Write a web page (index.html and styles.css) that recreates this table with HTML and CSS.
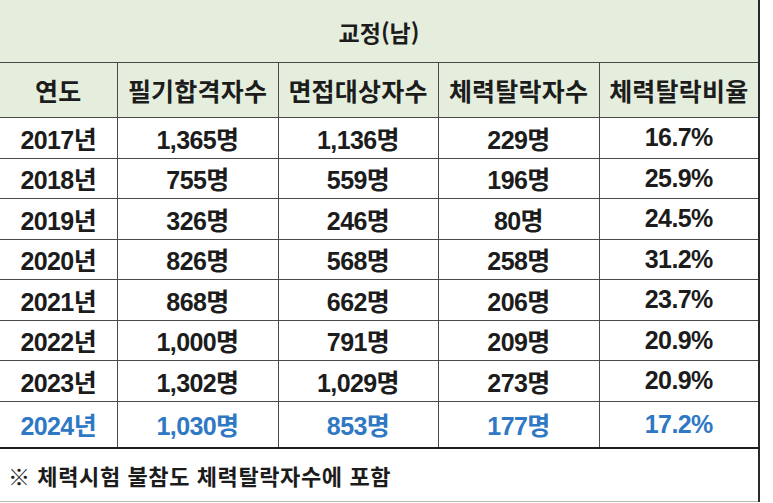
FILE: index.html
```html
<!DOCTYPE html>
<html lang="ko">
<head>
<meta charset="utf-8">
<link rel="stylesheet" href="styles.css">
</head>
<body>
<div class="page">
<table class="stats">
  <colgroup>
    <col class="c0"><col class="c1"><col class="c2"><col class="c3"><col class="c4">
  </colgroup>
  <tr class="title"><th colspan="5">교정(남)</th></tr>
  <tr class="head">
    <th>연도</th><th>필기합격자수</th><th>면접대상자수</th><th>체력탈락자수</th><th>체력탈락비율</th>
  </tr>
  <tr class="row"><td>2017년</td><td>1,365명</td><td>1,136명</td><td>229명</td><td>16.7%</td></tr>
  <tr class="row"><td>2018년</td><td>755명</td><td>559명</td><td>196명</td><td>25.9%</td></tr>
  <tr class="row"><td>2019년</td><td>326명</td><td>246명</td><td>80명</td><td>24.5%</td></tr>
  <tr class="row"><td>2020년</td><td>826명</td><td>568명</td><td>258명</td><td>31.2%</td></tr>
  <tr class="row"><td>2021년</td><td>868명</td><td>662명</td><td>206명</td><td>23.7%</td></tr>
  <tr class="row"><td>2022년</td><td>1,000명</td><td>791명</td><td>209명</td><td>20.9%</td></tr>
  <tr class="row"><td>2023년</td><td>1,302명</td><td>1,029명</td><td>273명</td><td>20.9%</td></tr>
  <tr class="row last"><td>2024년</td><td>1,030명</td><td>853명</td><td>177명</td><td>17.2%</td></tr>
  <tr class="note"><td colspan="5">※ 체력시험 불참도 체력탈락자수에 포함</td></tr>
</table>
</div>
</body>
</html>
```
FILE: styles.css
```css
html, body {
  margin: 0;
  padding: 0;
  background: #ffffff;
}
.page {
  width: 773px;
  height: 503px;
  overflow: hidden;
}
.stats {
  border-collapse: collapse;
  table-layout: fixed;
  width: 759px;
  font-family: "Liberation Sans", "Noto Sans CJK KR", sans-serif;
  color: #1c1c1c;
}
.c0 { width: 117px; }
.c1 { width: 161px; }
.c2 { width: 160px; }
.c3 { width: 161px; }
.c4 { width: 160px; }
.stats th, .stats td {
  padding: 0;
  text-align: center;
  border: 1px solid #4a4a4a;
  white-space: nowrap;
}
.stats tr > :first-child { border-left: none; }
.stats tr > :last-child { border-right: 2px solid #2a2a2a; }
.title th {
  height: 60px;
  background: #e5eedd;
  font-family: "Noto Sans CJK KR", sans-serif;
  font-size: 23px;
  font-weight: 700;
  border-top: none;
  padding-top: 2px;
}
.head th {
  height: 54px;
  background: #e5eedd;
  font-family: "Noto Sans CJK KR", sans-serif;
  font-size: 25px;
  font-weight: 700;
  letter-spacing: 0.2px;
}
.row td {
  height: 39.5px;
  font-size: 25px;
  font-weight: 700;
  letter-spacing: -0.6px;
}
.row.last td {
  height: 45px;
  color: #2f78c4;
  border-bottom: 2px solid #1e1e1e;
}
.note td {
  height: 52px;
  text-align: left;
  padding-left: 8px;
  font-family: "Noto Sans CJK KR", sans-serif;
  font-size: 22px;
  font-weight: 700;
  letter-spacing: 0.6px;
  border-bottom: 1px solid #b8b8b8;
}
```
